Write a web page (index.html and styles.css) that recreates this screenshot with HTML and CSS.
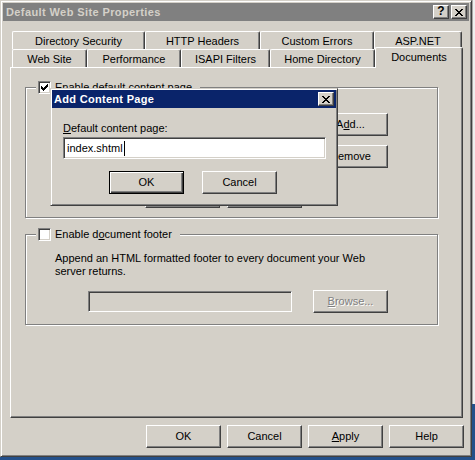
FILE: index.html
```html
<!DOCTYPE html>
<html lang="en">
<head>
<meta charset="utf-8">
<title>Default Web Site Properties</title>
<link rel="stylesheet" href="styles.css">
</head>
<body>
<div class="screen">
  <div class="window">
    <div class="titlebar">
      <span class="title">Default Web Site Properties</span>
      <span class="capbtn help">?</span>
      <span class="capbtn"><svg class="xglyph" width="8" height="7" viewBox="0 0 8 7"><path d="M0 0h2v1H0zM6 0h2v1H6zM1 1h2v1H1zM5 1h2v1H5zM2 2h4v1H2zM3 3h2v1H3zM2 4h4v1H2zM1 5h2v1H1zM5 5h2v1H5zM0 6h2v1H0zM6 6h2v1H6z"/></svg></span>
    </div>
    <div class="client">
      <div class="tabrow back">
        <div class="tab t-ds">Directory Security</div>
        <div class="tab t-hh">HTTP Headers</div>
        <div class="tab t-ce">Custom Errors</div>
        <div class="tab t-asp">ASP.NET</div>
      </div>
      <div class="tabrow front">
        <div class="tab t-ws">Web Site</div>
        <div class="tab t-pf">Performance</div>
        <div class="tab t-if">ISAPI Filters</div>
        <div class="tab t-hd">Home Directory</div>
        <div class="tab t-doc selected">Documents</div>
      </div>
      <div class="panel">
        <fieldset class="group group-default">
          <legend class="group-head">
            <span class="check"><svg width="11" height="11" viewBox="1 1 11 11"><path d="M9 3h1v1H9zM8 4h2v1H8zM3 5h1v1H3zM7 5h3v1H7zM3 6h2v1H3zM6 6h3v1H6zM3 7h5v1H3zM4 8h3v1H4zM5 9h1v1H5z"/></svg></span>
            <span class="check-label">Enable default content page</span>
          </legend>
          <div class="default-body">
            <div class="list-col">
              <div class="listbox"></div>
              <div class="move-row">
                <div class="btn">Move <u>U</u>p</div>
                <div class="btn">Move Do<u>w</u>n</div>
              </div>
            </div>
            <div class="side-buttons">
              <div class="btn btn-add">A<u>d</u>d...</div>
              <div class="btn btn-remove"><u>R</u>emove</div>
            </div>
          </div>
        </fieldset>
        <fieldset class="group group-footer">
          <legend class="group-head">
            <span class="check"></span>
            <span class="check-label">Enable d<u>o</u>cument footer</span>
          </legend>
          <p class="footer-text">Append an HTML formatted footer to every document your Web<br>server returns.</p>
          <div class="footer-row">
            <div class="field disabled"></div>
            <div class="btn btn-browse disabled-text"><span><u>B</u>rowse...</span></div>
          </div>
        </fieldset>
      </div>
      <div class="dialog-buttons">
        <div class="btn">OK</div>
        <div class="btn">Cancel</div>
        <div class="btn"><u>A</u>pply</div>
        <div class="btn">Help</div>
      </div>
    </div>

    <div class="dialog">
      <div class="titlebar active">
        <span class="title">Add Content Page</span>
        <span class="capbtn"><svg class="xglyph" width="8" height="7" viewBox="0 0 8 7"><path d="M0 0h2v1H0zM6 0h2v1H6zM1 1h2v1H1zM5 1h2v1H5zM2 2h4v1H2zM3 3h2v1H3zM2 4h4v1H2zM1 5h2v1H1zM5 5h2v1H5zM0 6h2v1H0zM6 6h2v1H6z"/></svg></span>
      </div>
      <div class="dialog-body">
        <div class="field-label"><u>D</u>efault content page:</div>
        <div class="field input"><span class="value">index.shtml</span><span class="caret"></span></div>
        <div class="dialog-actions">
          <div class="btn btn-default">OK</div>
          <div class="btn">Cancel</div>
        </div>
      </div>
    </div>
  </div>
  <div class="side"></div>
</div>
</body>
</html>
```

FILE: styles.css
```css
* { box-sizing: border-box; }
html, body { margin: 0; padding: 0; }
body {
  width: 475px;
  height: 460px;
  overflow: hidden;
  background: #24508a;
  font-family: "Liberation Sans", Arial, sans-serif;
  font-size: 11px;
  line-height: 13px;
  color: #000;
}
u { text-decoration: underline; text-underline-offset: 1px; }

.screen { display: flex; align-items: flex-start; }

.window {
  position: relative;
  width: 472px;
  height: 457px;
  background: #d4d0c8;
  border: 1px solid;
  border-color: #d4d0c8 #404040 #404040 #d4d0c8;
  box-shadow: inset 1px 1px #fff, inset -1px -1px #808080;
  padding: 2px;
  display: flex;
  flex-direction: column;
}
.side {
  width: 3px;
  height: 404px;
  background: #efefef;
  border-left: 1px solid #a8a8a8;
}

/* title bars */
.titlebar {
  height: 18px;
  flex: none;
  display: flex;
  align-items: center;
  padding: 0 2px 0 3px;
  background: #808080;
  color: #d4d0c8;
}
.titlebar .title {
  flex: 1;
  font-weight: bold;
  letter-spacing: 0.4px;
  white-space: nowrap;
}
.titlebar.active { background: #0a246a; color: #fff; padding-left: 2px; }
.titlebar.active .title { letter-spacing: 0.3px; }

.capbtn {
  width: 16px;
  height: 14px;
  flex: none;
  display: flex;
  align-items: center;
  justify-content: center;
  background: #d4d0c8;
  border: 1px solid;
  border-color: #fff #404040 #404040 #fff;
  box-shadow: inset -1px -1px #808080;
  color: #000;
}
.capbtn.help {
  margin-right: 2px;
  font-weight: bold;
  font-size: 12px;
  padding-bottom: 1px;
}
.xglyph { display: block; fill: #000; shape-rendering: crispEdges; }

/* client */
.client { padding-left: 7px; }

.tabrow { display: flex; padding-left: 2px; width: 453px; }
.tabrow.back { margin-top: 10px; height: 18px; }
.tabrow.front { height: 19px; border-bottom: 1px solid #fff; align-items: flex-end; }

.tab {
  flex: none;
  height: 18px;
  display: flex;
  justify-content: center;
  align-items: center;
  padding-top: 1px;
  border-left: 1px solid #fff;
  border-top: 1px solid #fff;
  border-right: 1px solid #404040;
  box-shadow: inset -1px 0 #808080;
  border-radius: 2px 2px 0 0;
  background: #d4d0c8;
  white-space: nowrap;
}
.tabrow.back .tab { padding-top: 2px; }
.t-ds { width: 133px; }
.t-hh { width: 115px; }
.t-ce { width: 114px; }
.t-asp { width: 88px; }
.t-ws { width: 75px; }
.t-pf { width: 94px; }
.t-if { width: 89px; }
.t-hd { width: 105px; }
.t-doc { width: 88px; }
.tab.selected {
  height: 21px;
  margin-top: -2px;
  margin-bottom: -1px;
  padding-top: 0;
  padding-bottom: 2px;
}

.panel {
  width: 453px;
  height: 350px;
  border-left: 1px solid #fff;
  border-right: 1px solid #404040;
  border-bottom: 1px solid #404040;
  box-shadow: inset -1px -1px #808080;
  padding: 13px 0 0 14px;
}

/* group boxes */
.group {
  width: 413px;
  margin: 0;
  padding: 0;
  min-width: 0;
  border: 1px solid #808080;
  box-shadow: inset 1px 1px #fff, 1px 1px #fff;
}
.group-footer { margin-top: 10px; padding-bottom: 11px; }
.group-default { padding-bottom: 9px; }

.group-head {
  display: flex;
  align-items: center;
  height: 13px;
  margin-left: 10px;
  padding: 0 8px 0 2px;
  background: #d4d0c8;
}
.check {
  width: 13px;
  height: 13px;
  flex: none;
  background: #fff;
  border: 1px solid;
  border-color: #808080 #fff #fff #808080;
  box-shadow: inset 1px 1px #404040, inset -1px -1px #d4d0c8;
}
.check svg { display: block; fill: #000; shape-rendering: crispEdges; }
.check-label { margin-left: 4px; white-space: nowrap; }

.default-body { display: flex; padding-left: 29px; }
.list-col { width: 247px; }
.listbox {
  width: 245px;
  height: 73px;
  margin-top: 11px;
  background: #fff;
  border: 1px solid;
  border-color: #808080 #fff #fff #808080;
  box-shadow: inset 1px 1px #404040, inset -1px -1px #d4d0c8;
}
.move-row { display: flex; gap: 7px; margin-top: 7px; padding-left: 90px; }
.side-buttons { margin-left: 11px; display: flex; flex-direction: column; }
.btn-add { margin-top: 19px; }
.btn-remove { margin-top: 9px; }

.footer-text { margin: 11px 0 0; padding-left: 29px; white-space: nowrap; }
.footer-row { display: flex; align-items: center; margin-top: 12px; }
.footer-row .field { margin-left: 62px; width: 204px; height: 21px; }
.btn-browse { margin-left: 21px; }

/* controls */
.btn {
  width: 75px;
  height: 23px;
  flex: none;
  display: flex;
  align-items: center;
  justify-content: center;
  background: #d4d0c8;
  border: 1px solid;
  border-color: #fff #404040 #404040 #fff;
  box-shadow: inset -1px -1px #808080;
  white-space: nowrap;
}
.btn-default {
  border-color: #000;
  box-shadow: inset 1px 1px #fff, inset -1px -1px #404040, inset -2px -2px #808080;
}
.disabled-text { color: #808080; text-shadow: 1px 1px 0 #fff; }

.field {
  background: #fff;
  border: 1px solid;
  border-color: #808080 #fff #fff #808080;
  box-shadow: inset 1px 1px #404040, inset -1px -1px #d4d0c8;
}
.field.disabled { background: #d4d0c8; }

.dialog-buttons { display: flex; gap: 6px; margin-top: 7px; padding-left: 136px; }

/* modal dialog */
.dialog {
  position: absolute;
  left: 49px;
  top: 87px;
  width: 288px;
  height: 118px;
  background: #d4d0c8;
  border: 1px solid;
  border-color: #d4d0c8 #404040 #404040 #d4d0c8;
  box-shadow: inset 1px 1px #fff, inset -1px -1px #808080;
  padding: 1px;
}
.dialog-body { padding: 14px 0 0 11px; }
.field-label { height: 13px; }
.field.input {
  width: 263px;
  height: 22px;
  margin-top: 2px;
  padding-left: 3px;
  display: flex;
  align-items: center;
}
.caret { width: 1px; height: 15px; background: #000; margin-left: 1px; }
.dialog-actions { display: flex; gap: 18px; margin-top: 12px; padding-left: 46px; }
```
